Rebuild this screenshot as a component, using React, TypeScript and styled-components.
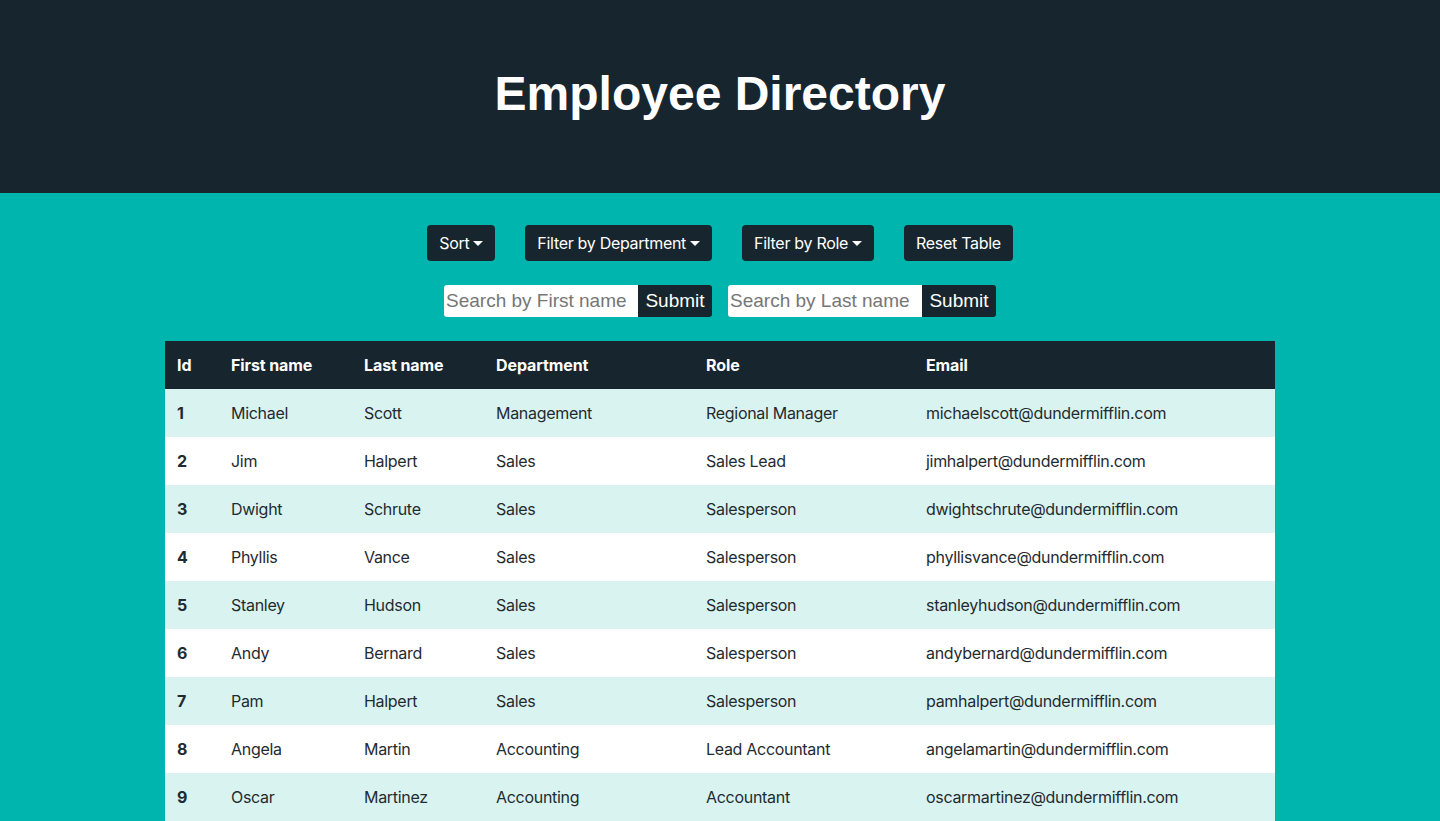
import styled, { createGlobalStyle } from "styled-components";

const GlobalStyle = createGlobalStyle`
  body {
    margin: 0;
    background: #00b5ad;
    font-family: Inter, "Noto Sans", sans-serif;
    color: #212529;
  }
`;

const Header = styled.header`
  height: 193px;
  box-sizing: border-box;
  padding-bottom: 7px;
  background: #16252e;
  display: flex;
  align-items: center;
  justify-content: center;
`;

const Title = styled.h1`
  margin: 0;
  color: #fff;
  font-family: "Liberation Sans", Arial, sans-serif;
  font-weight: 700;
  font-size: 48px;
`;

const Main = styled.main`
  padding-top: 32px;
  display: flex;
  flex-direction: column;
  align-items: center;
  gap: 24px;
`;

const ButtonRow = styled.div`
  display: flex;
  gap: 30px;
`;

const DarkButton = styled.button`
  height: 36px;
  padding: 0 12px;
  border: none;
  border-radius: 4px;
  background: #16252e;
  color: #fff;
  font-family: Inter, sans-serif;
  font-size: 16px;
  letter-spacing: -0.3px;
  display: flex;
  align-items: center;
`;

const Caret = styled.span`
  display: inline-block;
  margin-left: 4px;
  margin-top: 1px;
  border-top: 5px solid #fff;
  border-left: 5px solid transparent;
  border-right: 5px solid transparent;
`;

const SearchRow = styled.div`
  display: flex;
  gap: 16px;
`;

const SearchForm = styled.form`
  display: flex;
  height: 32px;
`;

const SearchInput = styled.input`
  width: 194px;
  box-sizing: border-box;
  border: none;
  border-radius: 3px 0 0 3px;
  padding: 0 2px;
  font-family: "Liberation Sans", Arial, sans-serif;
  font-size: 19px;
  background: #fff;
  outline: none;

  &::placeholder {
    color: #767676;
  }
`;

const SubmitButton = styled.button`
  width: 74px;
  border: none;
  border-radius: 0 3px 3px 0;
  background: #16252e;
  color: #fff;
  font-family: "Liberation Sans", Arial, sans-serif;
  font-size: 19px;
  padding: 0;
`;

const Table = styled.table`
  width: 1110px;
  border-collapse: collapse;
  font-size: 16px;
  table-layout: fixed;
`;

const HeadCell = styled.th`
  height: 48px;
  padding: 0 12px;
  text-align: left;
  font-weight: 700;
  letter-spacing: -0.1px;
  background: #16252e;
  color: #fff;
`;

const Row = styled.tr<{ $striped: boolean }>`
  background: ${(p) => (p.$striped ? "#d9f3f0" : "#fff")};
`;

const Cell = styled.td<{ $bold?: boolean }>`
  height: 48px;
  padding: 0 12px;
  font-weight: ${(p) => (p.$bold ? 700 : 400)};
  letter-spacing: -0.3px;
  color: #1f2b31;
`;

const columns = [
  { label: "Id", width: 54 },
  { label: "First name", width: 133 },
  { label: "Last name", width: 132 },
  { label: "Department", width: 210 },
  { label: "Role", width: 220 },
  { label: "Email", width: 361 },
];

const employees = [
  [1, "Michael", "Scott", "Management", "Regional Manager", "michaelscott@dundermifflin.com"],
  [2, "Jim", "Halpert", "Sales", "Sales Lead", "jimhalpert@dundermifflin.com"],
  [3, "Dwight", "Schrute", "Sales", "Salesperson", "dwightschrute@dundermifflin.com"],
  [4, "Phyllis", "Vance", "Sales", "Salesperson", "phyllisvance@dundermifflin.com"],
  [5, "Stanley", "Hudson", "Sales", "Salesperson", "stanleyhudson@dundermifflin.com"],
  [6, "Andy", "Bernard", "Sales", "Salesperson", "andybernard@dundermifflin.com"],
  [7, "Pam", "Halpert", "Sales", "Salesperson", "pamhalpert@dundermifflin.com"],
  [8, "Angela", "Martin", "Accounting", "Lead Accountant", "angelamartin@dundermifflin.com"],
  [9, "Oscar", "Martinez", "Accounting", "Accountant", "oscarmartinez@dundermifflin.com"],
];

export default function App() {
  return (
    <>
      <GlobalStyle />
      <Header>
        <Title>Employee Directory</Title>
      </Header>
      <Main>
        <ButtonRow>
          <DarkButton>
            Sort<Caret />
          </DarkButton>
          <DarkButton>
            Filter by Department<Caret />
          </DarkButton>
          <DarkButton>
            Filter by Role<Caret />
          </DarkButton>
          <DarkButton>Reset Table</DarkButton>
        </ButtonRow>
        <SearchRow>
          <SearchForm onSubmit={(e) => e.preventDefault()}>
            <SearchInput placeholder="Search by First name" />
            <SubmitButton type="submit">Submit</SubmitButton>
          </SearchForm>
          <SearchForm onSubmit={(e) => e.preventDefault()}>
            <SearchInput placeholder="Search by Last name" />
            <SubmitButton type="submit">Submit</SubmitButton>
          </SearchForm>
        </SearchRow>
        <Table>
          <colgroup>
            {columns.map((c) => (
              <col key={c.label} style={{ width: c.width }} />
            ))}
          </colgroup>
          <thead>
            <tr>
              {columns.map((c) => (
                <HeadCell key={c.label}>{c.label}</HeadCell>
              ))}
            </tr>
          </thead>
          <tbody>
            {employees.map((emp, i) => (
              <Row key={emp[0]} $striped={i % 2 === 0}>
                {emp.map((v, j) => (
                  <Cell key={j} $bold={j === 0}>
                    {v}
                  </Cell>
                ))}
              </Row>
            ))}
          </tbody>
        </Table>
      </Main>
    </>
  );
}
